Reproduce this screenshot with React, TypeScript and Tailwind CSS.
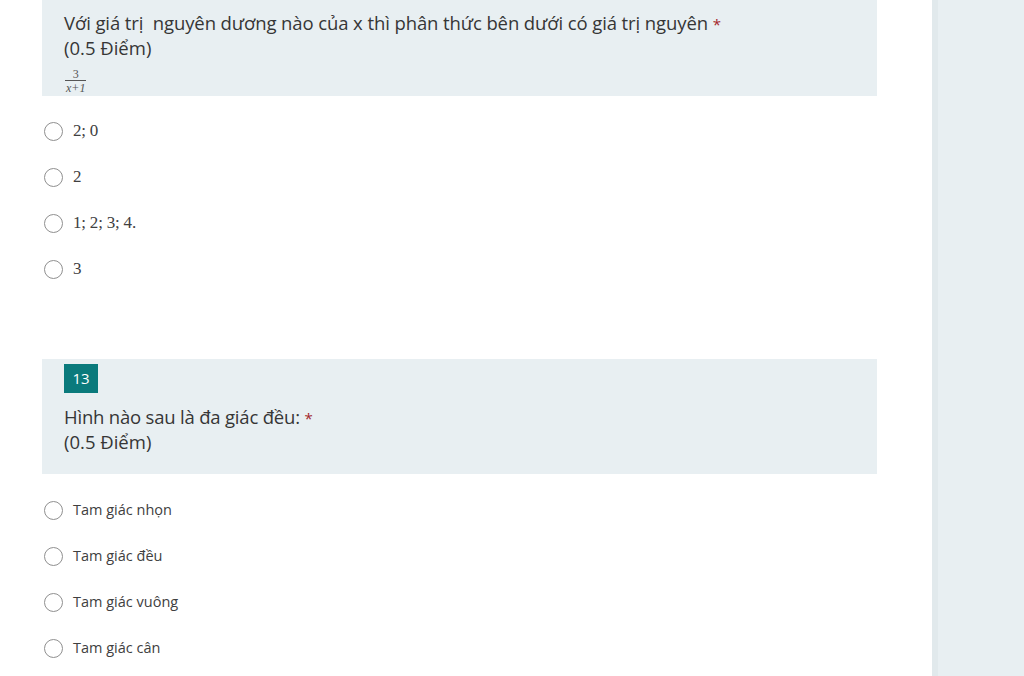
import React from "react";

const Radio = () => (
  <span className="w-[19px] h-[19px] rounded-full border-[1.5px] border-[#8f8f8f] bg-white shrink-0" />
);

const q1 = ["2;  0", "2", "1; 2; 3; 4.", "3"];
const q2 = ["Tam giác nhọn", "Tam giác đều", "Tam giác vuông", "Tam giác cân"];

export default function App() {
  return (
    <div className="w-[1024px] h-[676px] bg-white flex overflow-hidden" style={{ fontFamily: '"Open Sans", "Noto Sans", sans-serif' }}>
      <div className="w-[932px] shrink-0 pl-[42px] pr-[55px] flex flex-col">
        <div className="h-[96px] shrink-0 bg-[#e8eff2] pl-[22px] pt-[11px] overflow-hidden text-[#363636]">
          <div className="text-[18.5px] leading-[24px] tracking-[-0.1px] whitespace-nowrap">
            Với giá trị&nbsp; nguyên dương nào của x thì phân thức bên dưới có giá trị nguyên <span className="text-[#a4262c] text-[15px]">*</span>
          </div>
          <div className="text-[18.5px] leading-[24px]">(0.5 Điểm)</div>
          <div className="mt-[5px] ml-[1px] inline-flex flex-col items-center text-[12px] leading-[12px] text-[#555]" style={{ fontFamily: '"Liberation Serif", serif' }}>
            <span>3</span>
            <span className="border-t border-[#555] px-[1px] pt-[1px] italic">x+1</span>
          </div>
        </div>
        <div className="flex flex-col pt-[12px] shrink-0">
          {q1.map((t) => (
            <div key={t} className="h-[46px] flex items-center gap-[10px] pl-[2px]">
              <Radio />
              <span className="text-[17px] text-[#404040] tracking-[-0.2px]" style={{ fontFamily: '"Liberation Serif", serif' }}>{t}</span>
            </div>
          ))}
        </div>
        <div className="mt-[67px] h-[115px] shrink-0 bg-[#e8eff2] pl-[22px] pt-[5px] text-[#363636]">
          <div className="w-[34px] h-[29px] bg-[#0a7a7c] text-white text-[15px] flex items-center justify-center">13</div>
          <div className="mt-[12px] text-[18.5px] leading-[24px] tracking-[-0.2px]">
            Hình nào sau là đa giác đều: <span className="text-[#a4262c] text-[15px]">*</span>
          </div>
          <div className="text-[18.5px] leading-[24px]">(0.5 Điểm)</div>
        </div>
        <div className="flex flex-col pt-[13px] shrink-0">
          {q2.map((t) => (
            <div key={t} className="h-[46px] flex items-center gap-[10px] pl-[2px]">
              <Radio />
              <span className="text-[14.5px] text-[#404040]">{t}</span>
            </div>
          ))}
        </div>
      </div>
      <div className="flex-1 bg-[#e8eff2] border-l-[6px] border-[#e1e9ec]" />
    </div>
  );
}
